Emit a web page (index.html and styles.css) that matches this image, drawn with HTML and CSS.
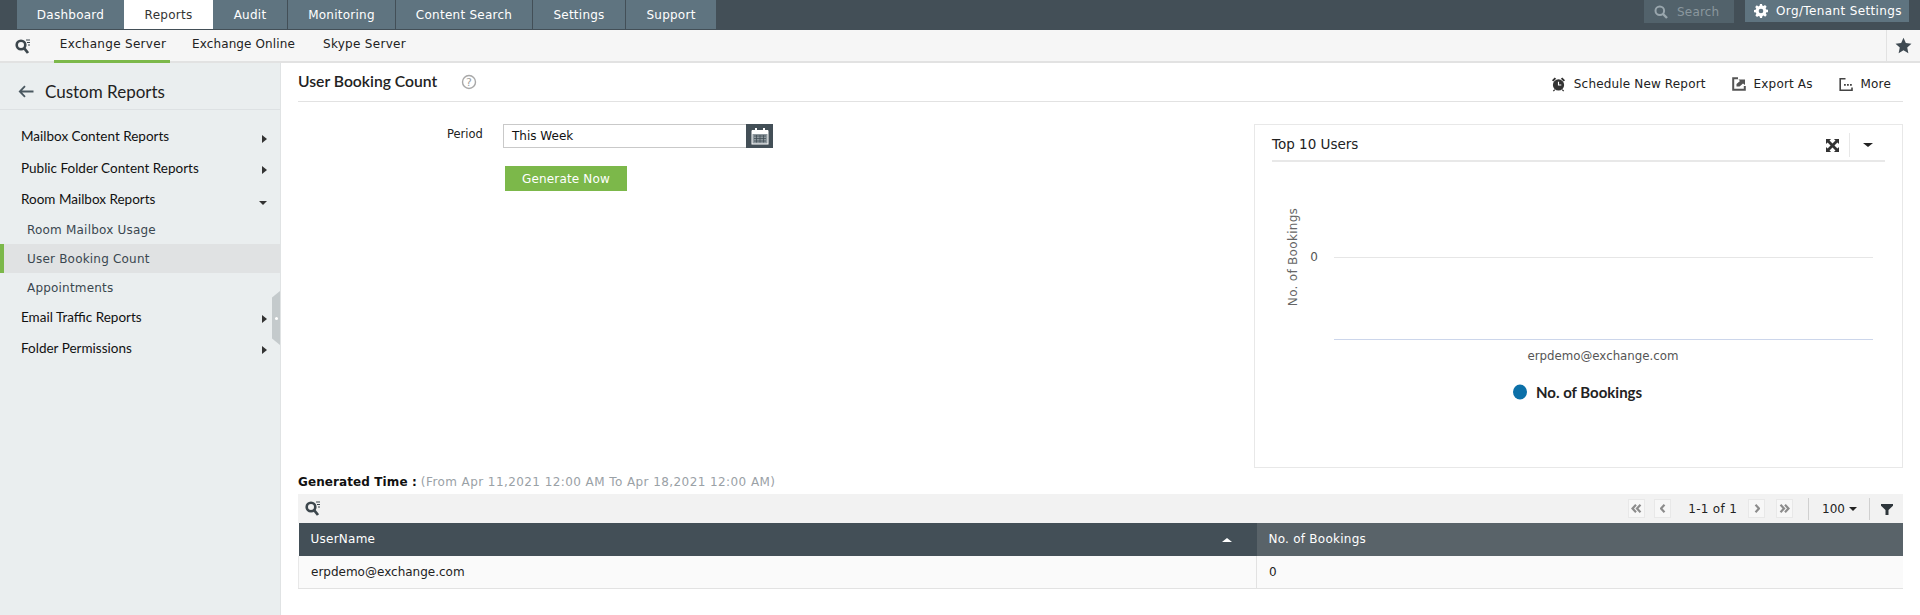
FILE: index.html
```html
<!DOCTYPE html>
<html lang="en">
<head>
<meta charset="utf-8">
<title>User Booking Count</title>
<link rel="stylesheet" href="styles.css">
</head>
<body>
<header class="topbar">
  <nav class="tabs">
    <a class="tab tab-dash">Dashboard</a>
    <a class="tab tab-reports active">Reports</a>
    <a class="tab tab-audit">Audit</a>
    <a class="tab tab-mon">Monitoring</a>
    <a class="tab tab-cs">Content Search</a>
    <a class="tab tab-set">Settings</a>
    <a class="tab tab-sup">Support</a>
  </nav>
  <div class="top-right">
    <div class="search">
      <svg width="14" height="14" viewBox="0 0 14 14"><circle cx="5.800" cy="5.800" r="4.300" fill="none" stroke="#99a6ad" stroke-width="2"/><path d="M9 9l4 4" stroke="#99a6ad" stroke-width="2.400"/></svg>
      <span>Search</span>
    </div>
    <div class="org">
      <svg width="14" height="14" viewBox="0 0 24 24"><path fill="#fff" d="M24 14v-4l-3.200-.6a9 9 0 0 0-.9-2.100l1.800-2.700-2.800-2.800-2.700 1.800a9 9 0 0 0-2.100-.9L13.750 0h-3.500l-.6 3.200a9 9 0 0 0-2.100.9L4.850 2.300 2.050 5.100l1.800 2.700a9 9 0 0 0-.9 2.100L0 10.250V14l3.200.6a9 9 0 0 0 .9 2.100l-1.800 2.700 2.800 2.800 2.700-1.800a9 9 0 0 0 2.100.9l.35 2.700h3.500l.6-3.200a9 9 0 0 0 2.100-.9l2.700 1.800 2.800-2.800-1.800-2.700a9 9 0 0 0 .9-2.100zM12 16a4 4 0 1 1 0-8 4 4 0 0 1 0 8z"/></svg>
      <span>Org/Tenant Settings</span>
    </div>
  </div>
</header>

<div class="subbar">
  <svg class="q-ico" width="16" height="16" viewBox="0 0 16 16"><circle cx="6" cy="7" r="4.300" fill="none" stroke="#3c464c" stroke-width="2.600"/><path d="M9 10l4 5" stroke="#3c464c" stroke-width="2.800"/><path d="M11 2h4M12 4.500h3M13 7h2" stroke="#3c464c" stroke-width="1"/></svg>
  <a class="sub active">Exchange Server</a>
  <a class="sub sub-online">Exchange Online</a>
  <a class="sub">Skype Server</a>
  <div class="star">
    <svg width="17" height="17" viewBox="0 0 16 16"><path fill="#3f4a52" d="M8 .8l2.200 4.900 5.300.6-4 3.600 1.100 5.300L8 12.500l-4.600 2.700 1.100-5.300-4-3.600 5.300-.6z"/></svg>
  </div>
</div>

<div class="body-row">
  <aside class="sidebar">
    <div class="side-head">
      <svg width="16" height="13" viewBox="0 0 16 13"><path d="M15.500 6.500H2M7 1.200L1.800 6.500 7 11.800" fill="none" stroke="#4a5860" stroke-width="1.800"/></svg>
      <span>Custom Reports</span>
    </div>
    <ul class="menu">
      <li class="group g-first">Mailbox Content Reports<i class="arr-r"></i></li>
      <li class="group">Public Folder Content Reports<i class="arr-r"></i></li>
      <li class="group">Room Mailbox Reports<i class="arr-d"></i></li>
      <li class="item">Room Mailbox Usage</li>
      <li class="item current">User Booking Count</li>
      <li class="item">Appointments</li>
      <li class="group">Email Traffic Reports<i class="arr-r"></i></li>
      <li class="group">Folder Permissions<i class="arr-r"></i></li>
    </ul>
    <div class="handle"><i></i></div>
  </aside>

  <main class="main">
    <div class="page-head">
      <h1>User Booking Count</h1>
      <svg class="help" width="16" height="16" viewBox="0 0 16 16"><circle cx="8" cy="8" r="6.500" fill="none" stroke="#a8a8a8" stroke-width="1.400"/><text x="8" y="11.500" text-anchor="middle" class="help-q">?</text></svg>
      <div class="actions">
        <a class="action">
          <svg width="15" height="16" viewBox="0 0 16 16"><circle cx="8" cy="9" r="6" fill="#333"/><path d="M8 5.500V9h3" fill="none" stroke="#fff" stroke-width="1.200"/><path d="M1 4l3-3 1.500 1.300-3 3zM15 4l-3-3-1.500 1.300 3 3z" fill="#333"/><path d="M4 14l-1.500 1.600M12 14l1.500 1.600" stroke="#333" stroke-width="1.400"/></svg>
          <span>Schedule New Report</span>
        </a>
        <a class="action">
          <svg width="14" height="14" viewBox="0 0 14 14"><path d="M6 1.200H1.200v11.600h11.600V9" fill="none" stroke="#555" stroke-width="2"/><path d="M4.500 9.500V7L8 4 6.500 2.500H13V8L11 6.500 7.500 9.500z" fill="#555"/></svg>
          <span>Export As</span>
        </a>
        <a class="action">
          <svg width="14" height="14" viewBox="0 0 14 14"><path d="M6.500 1.800H1.200v11.400H13v-2.700" fill="none" stroke="#444" stroke-width="1.600"/><path d="M5 7h1.800v1.800H5zM8 7h1.800v1.800H8zM11 7h1.800v1.800H11z" fill="#444"/></svg>
          <span>More</span>
        </a>
      </div>
    </div>

    <div class="mid-row">
      <section class="form">
        <div class="field">
          <label>Period</label>
          <div class="input-wrap">
            <span class="input">This Week</span>
            <span class="cal">
              <svg width="18" height="18" viewBox="0 0 18 18"><rect x="1" y="4" width="16" height="13" fill="#8d979d" stroke="#fff" stroke-width="1"/><rect x="1" y="3" width="16" height="4" fill="#fff"/><path d="M5 1v3M13 1v3" stroke="#fff" stroke-width="2"/><path d="M3 9h12M3 11.500h12M3 14h12M5.500 8v7.500M9 8v7.500M12.500 8v7.500" stroke="#434f57" stroke-width=".8"/></svg>
            </span>
          </div>
        </div>
        <button class="generate">Generate Now</button>
      </section>

      <section class="chart-card">
        <div class="chart-head">
          <span class="chart-title">Top 10 Users</span>
          <svg class="expand" width="13" height="13" viewBox="0 0 14 14"><path fill="#333" d="M0 0h5.500L3.800 1.700 7 4.900 10.200 1.700 8.500 0H14v5.500l-1.700-1.700L9.100 7l3.200 3.200L14 8.500V14H8.500l1.700-1.700L7 9.100l-3.200 3.200L5.500 14H0V8.500l1.700 1.700L4.900 7 1.700 3.800 0 5.500z"/></svg>
          <span class="chart-sep"></span>
          <i class="chart-caret"></i>
        </div>
        <svg class="chart" width="647" height="304" viewBox="0 0 647 304">
          <path class="grid" d="M79 95.500H618"/>
          <path class="axis" d="M79 177.500H618"/>
          <text class="tick" x="59" y="99" text-anchor="middle">0</text>
          <text class="ytitle" transform="translate(42 95) rotate(-90)" text-anchor="middle">No. of Bookings</text>
          <text class="xlabel" x="348" y="198" text-anchor="middle">erpdemo@exchange.com</text>
          <ellipse cx="265" cy="230" rx="7" ry="7.500" fill="#0c70a8"/>
          <text class="legend" x="281" y="236">No. of Bookings</text>
        </svg>
      </section>
    </div>

    <div class="gen-time"><b>Generated Time :</b> <span>(From Apr 11,2021 12:00 AM To Apr 18,2021 12:00 AM)</span></div>

    <div class="toolbar">
      <svg class="tool-q" width="16" height="16" viewBox="0 0 16 16"><circle cx="6" cy="7" r="4.300" fill="none" stroke="#3c464c" stroke-width="2.600"/><path d="M9 10l4 5" stroke="#3c464c" stroke-width="2.800"/><path d="M11 2h4M12 4.500h3M13 7h2" stroke="#3c464c" stroke-width="1"/></svg>
      <div class="pager">
        <span class="pg"><svg width="11" height="9" viewBox="0 0 11 9"><path d="M5 .8L1.500 4.500 5 8.200M9.500 .8L6 4.500l3.500 3.700" fill="none" stroke="#8c8c8c" stroke-width="2.200"/></svg></span>
        <span class="pg pg-gap"><svg width="6" height="9" viewBox="0 0 6 9"><path d="M4.500 .8L1 4.500l3.500 3.700" fill="none" stroke="#8c8c8c" stroke-width="2.200"/></svg></span>
        <span class="pg-text">1-1 of 1</span>
        <span class="pg"><svg width="6" height="9" viewBox="0 0 6 9"><path d="M1.500 .8L5 4.500 1.500 8.200" fill="none" stroke="#8c8c8c" stroke-width="2.200"/></svg></span>
        <span class="pg pg-gap2"><svg width="11" height="9" viewBox="0 0 11 9"><path d="M1.500 .8L5 4.500 1.500 8.200M6 .8l3.500 3.700L6 8.200" fill="none" stroke="#8c8c8c" stroke-width="2.200"/></svg></span>
        <span class="pg-sep"></span>
        <span class="pg-size">100</span><i class="pg-caret"></i>
        <span class="pg-sep sep2"></span>
        <svg class="funnel" width="12" height="12" viewBox="0 0 12 12"><path fill="#2e363b" d="M0 1h12v1.800L7.500 7v5h-3V7L0 2.800z"/></svg>
      </div>
    </div>

    <table class="grid-table">
      <thead>
        <tr><th class="c1">UserName<i class="sort"></i></th><th class="c2">No. of Bookings</th></tr>
      </thead>
      <tbody>
        <tr><td class="c1">erpdemo@exchange.com</td><td class="c2">0</td></tr>
      </tbody>
    </table>
  </main>
</div>
</body>
</html>
```

FILE: styles.css
```css
* { box-sizing: border-box; }
html, body { margin: 0; padding: 0; }
body {
  width: 1920px; height: 615px; overflow: hidden; background: #fff;
  font-family: "DejaVu Sans", sans-serif; font-size: 12px; color: #222;
  display: flex; flex-direction: column;
}
a { text-decoration: none; color: inherit; }

/* top bar */
.topbar { height: 30px; background: #434f57; display: flex; justify-content: space-between; flex: none; }
.tabs { display: flex; padding-left: 17px; height: 29px; }
.tab { display: flex; align-items: center; justify-content: center; background: #5f7480; color: #fff; font-size: 12px; letter-spacing: .25px; margin-right: 1px; }
.tab-dash { width: 107px; margin-right: 0; }
.tab-reports { width: 89px; background: #fff; color: #333; margin-right: 0; }
.tab-audit { width: 74px; }
.tab-mon { width: 107px; }
.tab-cs { width: 136px; }
.tab-set { width: 92px; }
.tab-sup { width: 90px; }
.top-right { display: flex; gap: 11px; padding-right: 11px; align-items: flex-start; }
.search { width: 90px; height: 23px; background: #52626b; display: flex; align-items: center; gap: 9px; padding-left: 10px; color: #8a979e; font-size: 12px; letter-spacing: .2px; }
.org { width: 164px; height: 22px; background: #5f7480; color: #fff; display: flex; align-items: center; gap: 8px; padding-left: 9px; font-size: 12px; letter-spacing: .37px; }

/* sub nav */
.subbar { height: 33px; background: #f6f6f6; border-bottom: 2px solid #e2e2e2; display: flex; align-items: stretch; flex: none; padding-left: 15px; }
.q-ico { align-self: center; margin-right: 23px; }
.sub { height: 33px; padding: 0 6px 3px; display: flex; align-items: center; font-size: 12px; letter-spacing: .3px; margin-right: 13px; color: #222; border-bottom: 3px solid transparent; }
.sub.active { border-bottom-color: #7cb84a; width: 116px; justify-content: center; padding: 0 0 3px 2px; margin-right: 16px; white-space: nowrap; }
.sub-online { letter-spacing: .12px; margin-right: 16px; }
.star { margin-left: auto; width: 34px; border-left: 1px solid #e2e2e2; display: flex; align-items: center; justify-content: center; }

/* layout */
.body-row { display: flex; flex: 1; min-height: 0; }
.sidebar { width: 281px; background: #eaeeef; border-right: 1px solid #e0e3e4; flex: none; position: relative; }
.side-head { height: 47px; border-bottom: 1px solid #dde1e3; display: flex; align-items: center; gap: 11px; padding: 10px 0 0 18px; font: 17px "Lato", sans-serif; color: #222; }
.menu { list-style: none; margin: 0; padding: 12px 0 0; }
.group { height: 31px; display: flex; align-items: center; padding: 0 0 2px 21px; font: 13.500px "Lato", sans-serif; color: #111; position: relative; }
.g-first { padding-bottom: 4px; }
.item { height: 29px; display: flex; align-items: center; padding-left: 27px; font-size: 12px; letter-spacing: .2px; color: #3a4750; }
.item.current { background: #e0e2e3; border-left: 4px solid #7cb84a; padding-left: 23px; }
.arr-r, .arr-d { position: absolute; right: 13px; top: 50%; width: 0; height: 0; }
.arr-r { border-left: 5px solid #333; border-top: 4px solid transparent; border-bottom: 4px solid transparent; margin-top: -3px; }
.arr-d { border-top: 4px solid #333; border-left: 4px solid transparent; border-right: 4px solid transparent; margin-top: 1px; }
.handle { position: absolute; right: 0; top: 228px; width: 8px; height: 54px; background: #c4cacc; clip-path: polygon(100% 0, 100% 100%, 0 88%, 0 12%); display: flex; align-items: center; justify-content: center; }
.handle i { width: 3px; height: 3px; background: #fff; border-radius: 50%; }

/* main */
.main { flex: 1; min-width: 0; padding: 0 17px; display: flex; flex-direction: column; }
.page-head { height: 39px; border-bottom: 1px solid #e2e2e2; display: flex; align-items: center; flex: none; }
.page-head h1 { margin: 0 0 2px; font: 600 15.700px "Lato", sans-serif; color: #222; }
.help { margin-left: 24px; }
.help-q { font: 11px "DejaVu Sans", sans-serif; fill: #a0a0a0; }
.actions { margin-left: auto; display: flex; align-items: center; padding: 4px 12px 0 0; }
.action { display: flex; align-items: center; gap: 8px; font-size: 12px; letter-spacing: .16px; margin-left: 26px; color: #222; }

.mid-row { display: flex; flex: none; height: 344px; margin-top: 22px; justify-content: space-between; }
.form { flex: none; padding-left: 149px; }
.field { display: flex; align-items: flex-start; }
.field label { width: 56px; font-size: 11.500px; color: #222; padding-top: 3px; }
.input-wrap { display: flex; height: 24px; width: 270px; }
.input { flex: 1; border: 1px solid #c9c9c9; border-right: 0; font-size: 12px; color: #111; padding: 4px 0 0 8px; }
.cal { width: 27px; background: #434f57; display: flex; align-items: center; justify-content: center; }
.generate { margin: 18px 0 0 58px; width: 122px; height: 25px; border: 0; background: #7cb84a; color: #fff; font: 12px "DejaVu Sans", sans-serif; letter-spacing: .15px; display: block; padding: 0; }

.chart-card { width: 649px; height: 344px; border: 1px solid #e8e8e8; }
.chart-head { margin: 0 17px; height: 37px; border-bottom: 2px solid #e8e8e8; display: flex; align-items: center; }
.chart-title { font-size: 13.500px; color: #222; margin-top: 2px; }
.expand { margin: 5px 0 0 auto; }
.chart-sep { width: 1px; height: 24px; background: #e8e8e8; margin: 4px 13px 0 10px; }
.chart-caret { width: 0; height: 0; border-top: 4px solid #222; border-left: 5px solid transparent; border-right: 5px solid transparent; margin: 5px 12px 0 0; }
.chart { display: block; }
.grid { stroke: #e6e6e6; stroke-width: 1; fill: none; }
.axis { stroke: #ccd6eb; stroke-width: 1; fill: none; }
.tick { font: 12px "DejaVu Sans", sans-serif; fill: #555; }
.ytitle { font: 12px "DejaVu Sans", sans-serif; fill: #666; letter-spacing: .3px; }
.xlabel { font: 11.800px "DejaVu Sans", sans-serif; fill: #555; }
.legend { font: 700 15px "Lato", sans-serif; fill: #222; }

.gen-time { margin-top: 6px; height: 20px; padding-bottom: 4px; font-size: 12px; display: flex; gap: 4px; align-items: center; flex: none; }
.gen-time b { color: #111; letter-spacing: .1px; }
.gen-time span { color: #9aa1a6; letter-spacing: .42px; }

.toolbar { height: 29px; background: #f2f2f2; display: flex; align-items: center; padding-left: 7px; flex: none; }
.tool-q { margin-bottom: 2px; }
.pager { margin-left: auto; display: flex; align-items: center; padding-right: 10px; font-size: 12px; }
.pg { width: 17px; height: 19px; border: 1px solid #e8e8e8; background: #f7f7f7; display: flex; align-items: center; justify-content: center; }
.pg-gap { margin-left: 9px; }
.pg-gap2 { margin-left: 11px; }
.pg-text { margin: 0 11px 0 17px; color: #222; letter-spacing: .3px; }
.pg-sep { width: 1px; height: 22px; background: #d0d0d0; margin: 0 13px 0 15px; }
.pg-size { color: #222; }
.pg-caret { width: 0; height: 0; border-top: 4px solid #222; border-left: 4.500px solid transparent; border-right: 4.500px solid transparent; margin-left: 4px; }
.sep2 { margin: 0 11px 0 12px; }

.grid-table { width: 100%; border-collapse: collapse; table-layout: fixed; flex: none; }
.grid-table th { height: 33px; text-align: left; color: #fff; font-weight: 400; font-size: 12px; letter-spacing: .25px; padding: 0 12px 2px; position: relative; }
th.c1 { background: #434f57; width: 958px; }
th.c2 { background: #596369; }
.grid-table td { height: 32px; background: #fafafa; border-bottom: 1px solid #e2e2e2; font-size: 12px; padding: 0 12px; color: #222; }
td.c1 { border-right: 1px solid #e2e2e2; border-left: 1px solid #e8e8e8; }
.sort { position: absolute; right: 25px; top: 15px; width: 0; height: 0; border-bottom: 4px solid #fff; border-left: 5px solid transparent; border-right: 5px solid transparent; }
```
